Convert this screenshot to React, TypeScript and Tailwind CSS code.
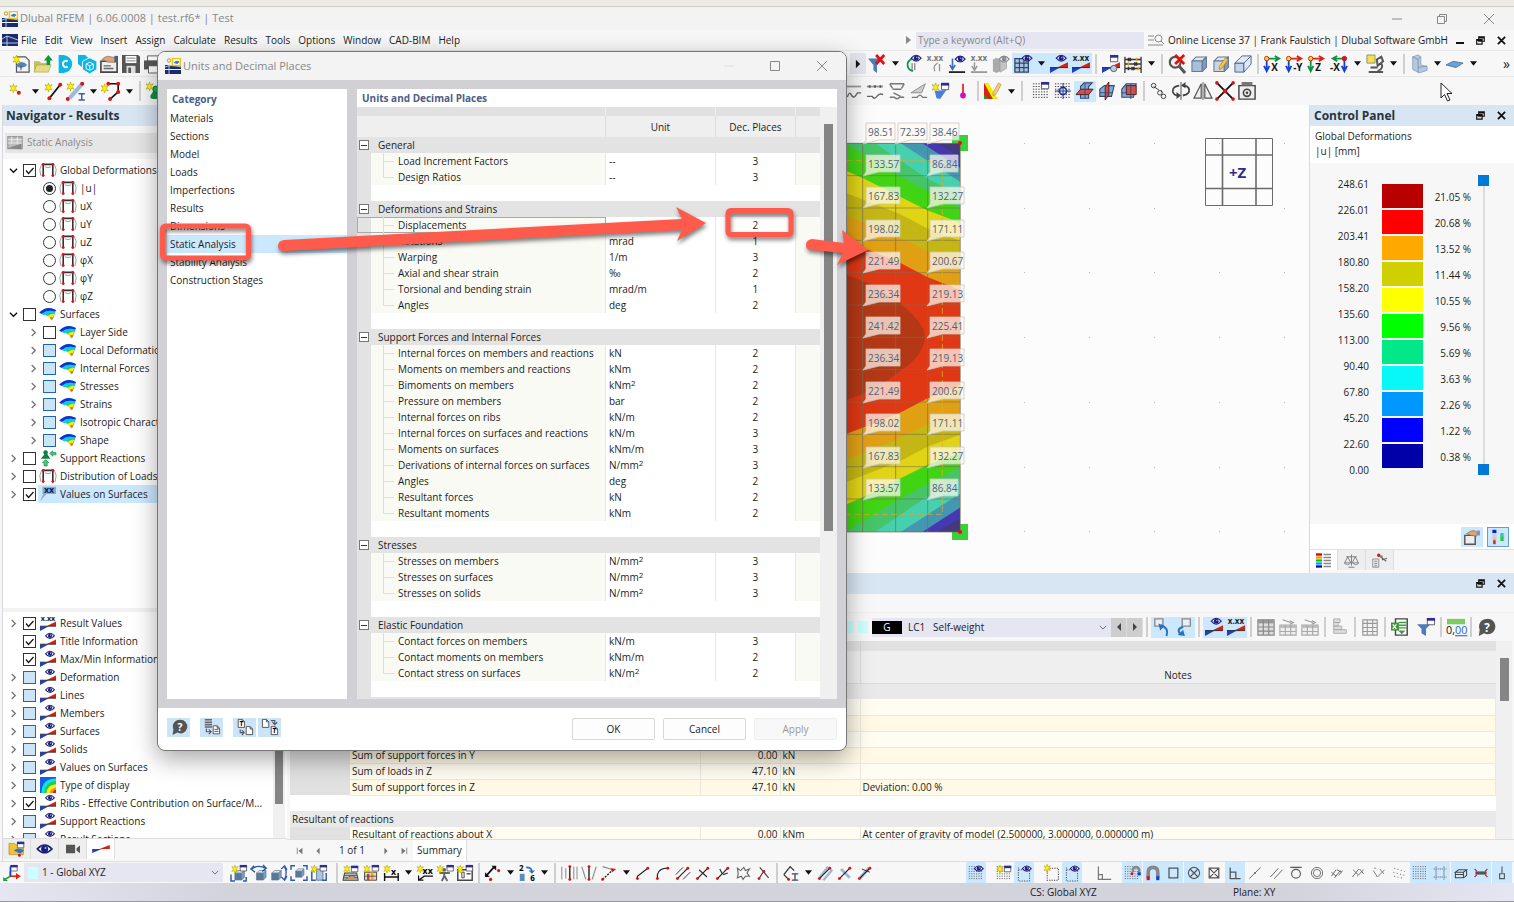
import { useState } from "react";
import type { ReactNode } from "react";
import clsx from "clsx";

/* ---------- icon parts ---------- */

const Star = ({ x = 0, y = 0 }) => (
  <path
    transform={`translate(${x} ${y})`}
    d="M5 0l1 3 3-1-2 3 2 3-3-1-1 3-1-3-3 1 2-3-2-3 3 1z"
    fill="#fff200"
    stroke="#a89400"
    strokeWidth=".6"
  />
);

const Eye = ({ x = 0, y = 0, c = "#1d1d7a" }) => (
  <g transform={`translate(${x} ${y})`}>
    <path d="M0 3.500Q5.500-3 11 3.500 5.500 10 0 3.500z" fill="#fff" stroke={c} strokeWidth="1.300" />
    <circle cx="5.500" cy="3.500" r="2.700" fill={c} />
    <circle cx="6.200" cy="2.700" r=".8" fill="#8fb4ff" />
  </g>
);

const Wedge = () => (
  <g>
    <path d="M0 20v-6h11z" fill="#1f3fc0" />
    <path d="M20 8v6H8z" fill="#d8200c" />
    <path d="M0 14h20" stroke="#222" strokeWidth="1" />
  </g>
);

const Win = ({ x = 0, y = 0 }) => (
  <g transform={`translate(${x} ${y})`}>
    <path d="M.5.5h8v7h-8z" fill="#fff" stroke="#555" />
    <path d="M0 0h9v3H0z" fill="#2c2c9c" />
  </g>
);

const Cube = ({ x = 0, y = 0, s = 1, c = "#a8c0dc", e = "#64798f" }) => (
  <g transform={`translate(${x} ${y}) scale(${s})`} stroke={e} strokeLinejoin="round">
    <path d="M1 5l4-4h10l-4 4z" fill="#dbe7f4" />
    <path d="M1 5h10v10H1z" fill={c} />
    <path d="M11 5l4-4v10l-4 4z" fill="#7f9cc0" />
  </g>
);

const Dot = ({ x, y, r = 1.8 }: { x: number; y: number; r?: number }) => (
  <circle cx={x} cy={y} r={r} fill="#e01010" />
);

const Xs = ({ c = "#222", t = "x.xx" }) => (
  <text x="10" y="7" textAnchor="middle" fontSize="9" fontWeight="700" fill={c} fontFamily="Open Sans">
    {t}
  </text>
);

const Grid = ({ c = "#555", x = 1, y = 1, n = 6 }) => (
  <g stroke={c} strokeWidth="1" strokeDasharray="1.500 1.500">
    {Array.from({ length: n }, (_, i) => (
      <path key={i} d={`M${x} ${y + 1 + i * 3}h17`} />
    ))}
  </g>
);

const Axis = ({ t, a, b, flip }: { t: string; a: string; b: string; flip?: boolean }) => (
  <g>
    <path d={flip ? "M16 4H4m4-3L3 4l5 3" : "M3 4h13m-4-3l5 3-5 3"} stroke={a} strokeWidth="2" fill="none" />
    <path d={flip ? "M16 4v12m-3-4l3 6 3-6" : "M3 4v12m-3-4l3 6 3-6"} stroke={b} strokeWidth="2" fill="none" />
    <circle cx={flip ? 16 : 3} cy="4" r="2.500" fill={flip ? "#d01818" : "#f8d820"} stroke="#c02020" />
    <text x={flip ? 0 : 8} y="18" fontSize="11" fontWeight="700" fill="#111" fontFamily="Open Sans">
      {t}
    </text>
  </g>
);

const Page = ({ x = 0, y = 0 }) => (
  <path transform={`translate(${x} ${y})`} d="M.5.5h5l3 3v7h-8zM5.500.5v3h3" fill="#fff" stroke="#555" strokeWidth="1.200" />
);

const Line2 = ({ c = "#222", d = "M3 17L16 4" }) => (
  <g>
    <path d={d} stroke={c} strokeWidth="1.500" fill="none" />
    <Dot x={3} y={17} />
    <Dot x={16} y={4} />
  </g>
);

const g = (d: string, c = "#555", w = 1.2) => <path d={d} stroke={c} strokeWidth={w} fill="none" />;

const icons: Record<string, ReactNode> = {
  "": null,
  new: <g><path d="M5 2h10l4 4v13H5z" fill="#f4f4f4" stroke="#555" strokeWidth="1.400" /><path d="M4 12q6-8 13-1-6 6-13 1z" fill="#5784b4" /><path d="M10 12v5" stroke="#345" /><Star /></g>,
  open: <g><path d="M0 19V7h6l2 2h7v10z" fill="#c9bf62" /><path d="M0 19l3-8h16l-3 8z" fill="#e6dc86" stroke="#a8a050" strokeWidth=".7" /><path d="M14 11V6h-3l5-6 5 6h-3v5z" fill="#0b9a3a" /></g>,
  dlubal: <g><path d="M3 0h5a10 10 0 010 20H3z" fill="#0cb5e6" /><path d="M13 7a3.500 3.500 0 100 6" stroke="#fff" strokeWidth="2.200" fill="none" /></g>,
  blocks: <g><path d="M0 0h8l4 4v10H5l-5-4z" fill="#0cb5e6" /><path d="M13 3l8 4v9l-8 5-8-5V7z" fill="#0cb5e6" stroke="#f7f7f7" /><path d="M13 8l4 2v5l-4 2-4-2v-5zM13 12v5M13 12l4-2M13 12l-4-2" stroke="#fff" fill="none" /></g>,
  hand: <g><path d="M1 7h18v12H1z" fill="#eee" stroke="#444" strokeWidth="1.800" /><path d="M4 12h8M4 15h11" stroke="#666" strokeWidth="1.400" /><path d="M2 5q5-5 10-3l6 1v5H9z" fill="#d9a57c" stroke="#7a5030" strokeWidth=".6" /><path d="M16 1h4v7h-4z" fill="#4b5f86" /></g>,
  save: <g><path d="M0 0h18l2 2v18H0z" fill="#555" /><path d="M4 1h12v8H4z" fill="#fff" /><path d="M5 3.500h10M5 6.500h10" stroke="#777" /><path d="M5 12h10v8H5z" fill="#ddd" /><path d="M7 14h3v6H7z" fill="#555" /></g>,
  print: <g><path d="M4 1h12v6H4z" fill="#fff" stroke="#555" /><path d="M0 6h20v10H0z" fill="#555" /><path d="M5 12h10v8H5z" fill="#fff" stroke="#555" /></g>,
  node: <g><Star x={1} y={2} /><Dot x={12} y={12} r={2.200} /></g>,
  line: <g>{g("M6 18L18 3", "#111", 2)}<Dot x={6} y={18} r={2.200} /><Dot x={18} y={3} r={2.200} /><Star x={0} y={1} /></g>,
  member: <g>{g("M4 18L18 2", "#9db8e0", 4.5)}<Dot x={2} y={19} r={2.200} /><Dot x={18} y={2} r={2.200} /><Star /><path d="M14 13h7M14 20h7M17.500 13v7" stroke="#3e5f9a" strokeWidth="1.600" /></g>,
  poly: <g>{g("M6 2h12v9l-9 8", "#111", 1.8)}<Dot x={7} y={2} r={2.200} /><Dot x={18} y={2} r={2.200} /><Dot x={18} y={11} r={2.200} /><Dot x={9} y={19} r={2.200} /><Star x={-2} y={2} /></g>,
  support: <g><path d="M8 19q-4 0-3-4l4-6h4l4 6q1 4-3 4z" fill="#109040" /><circle cx="11" cy="8" r="3.500" fill="#18b050" stroke="#064" /><Star x={-1} y={0} /></g>,
  play: <path d="M7 4l6 6-6 6z" fill="#111" />,
  filterx: <g><path d="M0 4h16l-6 7v9l-4-3v-6z" fill="#4d7bbb" /><path d="M9 0l9 10M18 0L9 10" stroke="#e01010" strokeWidth="3" /></g>,
  curveeye: <g>{g("M9 4Q3 7 4 12t6 6", "#0a9a4a", 2)}{g("M12 9v8M9 9v8", "#555", 1)}<Eye x={8} y={0} /></g>,
  curvex: <g><Xs c="#777" />{g("M13 9q-6 3-3 9M15 10v8", "#999", 1.5)}</g>,
  loadeye: <g>{g("M5 4v11M2 11l3 5 3-5", "#3a6fb0", 1.8)}<path d="M1 19h18" stroke="#222" strokeWidth="2" /><Eye x={8} y={1} /></g>,
  loadx: <g><Xs c="#777" />{g("M5 8v8M2 12l3 5 3-5", "#999", 1.6)}<path d="M1 19h18" stroke="#999" strokeWidth="2" /></g>,
  boxes: <g><path d="M1 5l4-2 4 2v13l-4 2-4-2z" fill="#aaa" /><path d="M9 3h7v12l-7 4z" fill="#c4c4c4" stroke="#888" strokeWidth=".6" /><Eye x={8} y={1} c="#888" /></g>,
  grideye: <g><path d="M1 4h15v15H1z" fill="#a8c4e4" stroke="#2c4468" strokeWidth="1.400" /><path d="M1 9h15M1 14h15M6 4v15M11 4v15" stroke="#2c4468" strokeWidth="1.200" /><Eye x={9} y={0} /></g>,
  wedgeeye: <g><Wedge /><Eye x={7} y={0} /></g>,
  wedgex: <g><Xs /><Wedge /></g>,
  wedge: <g><path d="M-1 15v-5h12z" fill="#1f3fc0" /><path d="M21 5v5H8z" fill="#d8200c" /></g>,
  wedgewin: <g><Wedge /><Win x={9} y={0} /><circle cx="13" cy="15" r="3.500" fill="#bcd" stroke="#456" /></g>,
  abacus: <g>{g("M1 2v18M19 2v18M1 5h18M1 10h18M1 15h18", "#333", 1.4)}<path d="M5 3v4M7 3v4M12 8v4M14 8v4M5 13v4M9 13v4M11 13v4" stroke="#333" strokeWidth="1.800" /><path d="M14 3v4M5 8v4M16 13v4" stroke="#e0a010" strokeWidth="1.800" /></g>,
  zoomx: <g><circle cx="8" cy="8" r="6" fill="#eee" stroke="#555" strokeWidth="2.400" /><path d="M12 12l7 8" stroke="#555" strokeWidth="3.400" /><path d="M8 0l10 10M18 0L8 10" stroke="#e01010" strokeWidth="3" /></g>,
  cube: <Cube x={1} y={1} s={1.15} />,
  cubepen: <g><Cube x={1} y={1} s={1.15} c="#cdd5de" /><path d="M8 13l7-10 3 2-7 10-3 1z" fill="#f5c542" stroke="#b06010" strokeWidth=".6" /></g>,
  cubewire: <g><path d="M1 9h10v10H1z" fill="#c4d4ea" stroke="#46608a" /><path d="M1 9l8-8h10l-8 8zM19 1v9l-8 9V9" fill="#e0e8f4" stroke="#46608a" /></g>,
  ax: <Axis t="X" a="#109040" b="#1840d0" />,
  ay: <Axis t="-Y" a="#d02818" b="#1840d0" />,
  az: <Axis t="Z" a="#d02818" b="#109040" />,
  anx: <Axis t="-X" a="#109040" b="#1840d0" flip />,
  scope: <g><path d="M1 0h9v9H1z" fill="#f4e24a" stroke="#888" /><path d="M3 19h16M12 5l5-3 2 5-6 5zM17 9q3 6-4 9M5 14h8" stroke="#555" strokeWidth="2.200" fill="none" /></g>,
  solid: <g><path d="M3 2l6-2 3 2v9l7 2v4l-9 3-7-4z" fill="#b4c8e0" stroke="#8095b0" strokeWidth=".8" /><path d="M3 2l6 3v14M9 5l3-3M9 14l10-2" stroke="#7c93b3" fill="none" /></g>,
  plate: <path d="M0 11l8-4 11 2-8 5z" fill="#6ba0d8" stroke="#35608e" strokeWidth=".8" />,
  supA: <g>{g("M1 5h18", "#999", 2)}{g("M1 16h3q2-6 4-2t4 2 3-4h4", "#666", 1.5)}</g>,
  supB: <g>{g("M1 5h18", "#999", 2)}{g("M3 5h2M9 5h2M15 5h2", "#555", 3)}{g("M1 16h6q2 4 5 0t7-2", "#666", 1.5)}</g>,
  supC: <g>{g("M2 2h16M2 2l3 5M18 2l-3 5M5 8h10M2 17h5q3 3 6 0h5M6 12l8 4", "#777", 1.6)}</g>,
  supD: <g><path d="M1 12L17 2l-4 10z" fill="#ccc" stroke="#888" /><path d="M2 17h6q3-5 6 0h5" stroke="#777" fill="none" strokeWidth="1.500" /></g>,
  winstar: <g><path d="M3 10l13-1-7 10-4-1z" fill="#4b7de0" /><Win x={10} y={1} /><Star x={-1} y={1} /></g>,
  pin: <g>{g("M10 2v12", "#e01010", 1.8)}<circle cx="10" cy="15" r="3.200" fill="#d010c0" /></g>,
  colors: <g><path d="M0 1l15 18H0z" fill="#10a030" /><path d="M0 1h5l10 18h-5z" fill="#ffe500" /><path d="M0 1v13l5 5h4z" fill="#e02010" /><path d="M10 12L16 1l3 2-6 11-3 1z" fill="#f2d060" stroke="#976" strokeWidth=".6" /></g>,
  gridwin: <g><Grid c="#333" /><Win x={10} y={0} /></g>,
  gridnode: <g><Grid c="#333" /><circle cx="10" cy="10" r="4" fill="#d8e4f8" stroke="#1d2f8a" strokeWidth="1.800" /><path d="M10 1v18M1 10h18" stroke="#1d2f8a" /></g>,
  planeA: <g><path d="M5 5l4-4h9l-4 4v13H5z" fill="#84a8d4" stroke="#2f4a70" strokeWidth="1.200" /><path d="M0 14l5-6h14l-5 6z" fill="#d05050" stroke="#501414" /><path d="M10 2v16" stroke="#2f4a70" /></g>,
  planeB: <g><path d="M2 8l5-4h11l-3 12H2z" fill="#84a8d4" stroke="#2f4a70" strokeWidth="1.200" /><path d="M8 6l4-6v14l-4 6z" fill="#d05050" stroke="#501414" /><path d="M2 12h14" stroke="#2f4a70" /></g>,
  planeC: <g><path d="M2 8l5-6h11l-3 15H2z" fill="#84a8d4" stroke="#2f4a70" strokeWidth="1.200" /><path d="M7 4h11v10H7z" fill="#d05050" stroke="#501414" /><path d="M12 2v17M2 12h5" stroke="#2f4a70" /></g>,
  link: <g>{g("M4 5l6 4M12 9l2 3", "#333", 1)}<circle cx="4" cy="4" r="2.500" fill="none" stroke="#333" /><circle cx="11" cy="12" r="2.500" fill="none" stroke="#333" /><circle cx="15" cy="16" r="2.500" fill="none" stroke="#333" /></g>,
  rotate: <g>{g("M8 4q-8 1-7 7 1 4 6 4M12 15q8-1 7-7-1-4-7-4", "#444", 2)}{g("M10 0v20", "#444", 1)}<path d="M5 11l5 4-5 4zM15 0v7l-5-3z" fill="#444" /></g>,
  mirror: <g><path d="M8 2v16H0zM12 2v16h8z" fill="#eee" stroke="#555" strokeWidth="1.300" />{g("M10 0v20", "#555", 1)}</g>,
  cut: <g>{g("M1 1l18 18M19 1L1 19", "#111", 2)}<Dot x={1} y={1} r={2} /><Dot x={19} y={1} r={2} /><Dot x={10} y={10} r={2.500} /><Dot x={1} y={19} r={2} /><Dot x={19} y={19} r={2} /></g>,
  camera: <g><path d="M1 4h18v15H1z" fill="#eee" stroke="#444" strokeWidth="1.600" /><path d="M4 0h12v4H4z" fill="#777" /><circle cx="10" cy="12" r="4" fill="none" stroke="#444" strokeWidth="1.800" /><circle cx="10" cy="12" r="1.500" fill="#444" /></g>,
  frame: <g>{g("M4 3h12M4 3v14M16 3v14", "#333", 2)}{g("M2 3Q-2 9 1 17M18 3q4 6 1 14M6 6q4 2 8 0", "#888", 1)}<Dot x={4} y={3} /><Dot x={16} y={3} /><Dot x={4} y={17} /><Dot x={16} y={17} /></g>,
  surface: <g><path d="M0 8Q8 1 15 3l5 2-4 12-5-4z" fill="#18d070" /><path d="M-1 8Q7 1 15 3l5 2-1 2Q9 4 2 10z" fill="#1030e0" /><path d="M2 10q7-6 17-3l-1 3Q11 7 6 12z" fill="#10c8f0" /><path d="M9 13q4-4 9-3l-2 4-4 1z" fill="#f4ec10" /><path d="M12 15q2-2 4-1l-1 4z" fill="#ff7010" /></g>,
  reaction: <g><circle cx="7" cy="3" r="2.800" fill="#0c8040" /><path d="M1 11l5-6h3l4 6z" fill="#0c8040" /><path d="M12 4l4-3v2h4v3h-4v2zM7 12l4 4H9v4H5v-4H3z" fill="#48c878" stroke="#0c8040" strokeWidth=".7" /></g>,
  flag: <g><path d="M3 1h17v9H8l-8 9 4-9H3z" fill="#86aed2" /><text x="5" y="9" fontSize="11" fontWeight="700" fill="#0c1c50" fontFamily="Open Sans">xx</text></g>,
  contour: <g><path d="M0 0h20v20H0z" fill="#1060f0" /><path d="M2 20Q2 2 20 2v18z" fill="#10e0f0" /><path d="M5 20Q6 6 20 5v15z" fill="#20d040" /><path d="M8 20Q9 10 20 9v11z" fill="#f4f020" /><path d="M12 20q1-6 8-7v7z" fill="#ff9010" /><path d="M16 20q0-3 4-4v4z" fill="#e02010" /></g>,
  folder: <g><path d="M0 3h7l2 2h9v12H0z" fill="#f2c230" stroke="#a87a10" strokeWidth=".7" /><Win x={10} y={1} /><path d="M6 12q6-5 13 0l-5 4z" fill="#2e76c8" /><Dot x={13} y={18} /></g>,
  eye: <g transform="translate(-1 4) scale(1.900 1.700)"><Eye /></g>,
  cam: <path d="M0 4h13v12H0zM15 9l5-4v11l-5-4z" fill="#555" />,
  xyz: <g><Win x={8} y={0} />{g("M8 8v6l-7 4", "#18a040", 2)}{g("M8 14h10", "#e02010", 2)}<path d="M15 10l6 4-6 4z" fill="#e02010" /><path d="M-1 15v5h6z" fill="#18a040" />{g("M8 2v12", "#1840d0", 2)}</g>,
  vA: <g><Cube x={4} y={6} s={0.85} c="#56789c" />{g("M0 12v8h5M15 20h4v-5", "#2b59a8", 1.8)}<Win x={11} y={0} /><Star x={0} y={0} /></g>,
  vB: <g><Cube x={6} y={6} s={0.85} c="#56789c" />{g("M1 5q8-6 17-1M4 1L0 5l5 4M15 0l4 4-5 4", "#2b59a8", 1.8)}</g>,
  vC: <g><Cube x={0} y={6} s={0.85} c="#56789c" />{g("M17 2q4 8 0 16M13 5l4-4 3 5M13 15l4 4 3-5", "#2b59a8", 1.6)}</g>,
  vD: <g><Cube x={5} y={4} s={0.75} c="#56789c" />{g("M0 6V1h5M15 1h5v5M0 14v5h5M15 19h5v-5", "#2b59a8", 1.8)}</g>,
  vE: <g><path d="M7 5h8v14H7z" fill="#a9c4e4" stroke="#4a6a90" />{g("M1 8v11h5M19 10v9h-5M3 3v5", "#2b59a8", 1.8)}<Win x={11} y={0} /><Star x={-1} /></g>,
  cA: <g><path d="M2 10h15l2 9H0z" fill="#c4c4c4" stroke="#444" strokeWidth="1.300" /><path d="M1 13h17M1 16h18M4 18q6-8 12-2" stroke="#444" fill="none" /><path d="M6 15h8v3H6z" fill="#e09050" /><Win x={10} y={1} /><Star /></g>,
  cB: <g><path d="M2 9h15v10H2z" fill="#e8d8c8" stroke="#444" strokeWidth="1.200" /><path d="M5 11h3v8H5z" fill="#d04020" /><path d="M10 9h3v10h-3z" fill="#f0a020" /><path d="M2 14h15" stroke="#444" /><Win x={11} y={0} /><Star /></g>,
  cC: <g>{g("M2 10v10M19 10v10M2 15h17", "#111", 1.8)}<text x="10" y="12" fontSize="11" fontWeight="700" fontFamily="Open Sans">x</text><Star /></g>,
  cD: <g>{g("M2 19l7-5h11M2 13v6h6", "#111", 1.6)}<text x="7" y="11" fontSize="11" fontWeight="700" fontFamily="Open Sans">xx</text><Star x={-1} /></g>,
  cE: <g>{g("M9 9v5l-3 6M9 13l4 7M3 10h13", "#666", 2.4)}<circle cx="9" cy="6" r="2.400" fill="#666" /><Win x={12} y={0} /><Star x={-1} /></g>,
  cF: <g><path d="M1 6h18v13H1z" fill="#fff" stroke="#444" strokeWidth="1.800" /><path d="M6 9v7h3V9z" fill="#eee" stroke="#333" />{g("M12 11h5", "#333", 1.6)}<Win x={11} y={0} /><Star x={-1} /></g>,
  nA: <g>{g("M2 13L11 3", "#111", 2.2)}<path d="M0 9v6h6zM8 1h6v6z" fill="#111" /><Dot x={17} y={7} r={2} /><Dot x={7} y={18} r={2} /></g>,
  nB: <g><text x="0" y="8" fontSize="10" fontWeight="700" fontFamily="Open Sans">2</text><text x="14" y="20" fontSize="10" fontWeight="700" fontFamily="Open Sans">6</text><path d="M1 11h6v9H1z" fill="#5b8cc0" />{g("M9 3q7 0 7 5", "#2b70b8", 2)}<path d="M12 7h8l-4 4z" fill="#2b70b8" /></g>,
  l1: <g>{g("M1 2v16M6 4v13M16 2v16M20 2v16", "#888", 1.2)}{g("M11 2v16", "#111", 1.6)}<Dot x={11} y={2} /><Dot x={11} y={18} /></g>,
  l2: <g>{g("M1 2l5 16M19 2l-5 16", "#888", 1.4)}{g("M10 2v16", "#111", 1.6)}<Dot x={10} y={2} /><Dot x={10} y={18} /></g>,
  l3: <g>{g("M2 2l13 4", "#888", 1.4)}<path d="M2 18L15 6" stroke="#111" strokeWidth="1.600" strokeDasharray="2.500 1.500" /><path d="M12 4l7 1-5 4z" fill="#e01010" /><Dot x={2} y={18} /></g>,
  l4: <Line2 d="M3 17V14L16 4" />,
  l5: <Line2 d="M3 17V12Q5 4 16 4" />,
  l6: <g><Line2 />{g("M1 12l9-9M10 18l9-9", "#333")}</g>,
  l7: <g><Line2 />{g("M5 6l10 9", "#333", 1.5)}</g>,
  l8: <g><Line2 />{g("M6 5l3 6M10 12l6-2", "#333", 1.5)}</g>,
  l9: g("M3 4l4 3 4-4 2 4 5-2-3 5 3 4-5 0-3 4-2-4-5 2 1-5z", "#666", 1.4),
  l10: <g>{g("M5 17l5-8M6 3l11 13", "#444", 1.5)}<Dot x={5} y={17} /><Dot x={11} y={8} /></g>,
  m1: <g>{g("M1 12L9 2l5 5M1 12l6 6", "#333", 1.6)}<Dot x={7} y={18} /><path d="M11 11h8M11 19h8M15 11v8" stroke="#445" strokeWidth="1.600" /></g>,
  m2: <g>{g("M3 16L14 2M8 19L19 6", "#9db8d8", 3)}<Line2 /></g>,
  m3: <g>{g("M5 5l11 11", "#9db8d8", 3.5)}<Line2 /></g>,
  m4: <g>{g("M4 16L15 4", "#9db8d8", 4)}{g("M6 5l10 4", "#333")}<Line2 /></g>,
  gE: <g><Grid /><Eye x={8} y={1} /></g>,
  gS: <g><Grid /><Star x={0} y={0} /><Win x={10} y={1} /></g>,
  gD: <g><path d="M4 4h14v15H4z" fill="none" stroke="#444" strokeWidth="1.300" strokeDasharray="1.500 1.500" /><Star x={-1} y={-1} /></g>,
  gF: <g><path d="M3 6h14v14M3 3v17h14" fill="none" stroke="#555" strokeWidth="1.300" strokeDasharray="1.500 1.500" /><Eye x={8} y={1} /></g>,
  ang: g("M3 2v16h16M3 12h5v6", "#777", 1.5),
  gM: <g><Grid /><path d="M11 9V5q4-5 8 0v4" stroke="#888" strokeWidth="3" fill="none" /><Dot x={10} y={11} /><path d="M17 9h4v4h-4z" fill="#1840d0" /></g>,
  magnet: <g><path d="M4 16V9q0-6 6-6t6 6v7" stroke="#888" strokeWidth="4.500" fill="none" /><path d="M2 14h4v5H2z" fill="#d01818" /><path d="M14 14h4v5h-4z" fill="#1840d0" /></g>,
  sq: g("M5 4h11v12H5z", "#555", 1.6),
  cx: <g>{g("M5 5l10 10M15 5L5 15", "#555", 1.5)}<circle cx="10" cy="10" r="7" fill="none" stroke="#555" strokeWidth="1.400" /></g>,
  bx: g("M4 4h12v12H4zM4 4l12 12M16 4L4 16", "#555", 1.5),
  perp: g("M4 3v14h13M4 9h7v8", "#555", 1.6),
  sl: g("M3 17L17 3M9 9l2 2", "#666"),
  sl2: g("M3 15L13 4M8 17L18 6", "#666"),
  tang: <g>{g("M3 3h14", "#555", 1.6)}<circle cx="10" cy="11" r="5.500" fill="none" stroke="#555" strokeWidth="1.400" /></g>,
  circ: <g><circle cx="10" cy="10" r="7" fill="none" stroke="#555" /><circle cx="10" cy="10" r="4.500" fill="none" stroke="#555" /></g>,
  in1: g("M3 14l6-8M7 16l7-9M3 9l6 5M10 6l6 3M12 13l5-6", "#666"),
  in2: g("M3 15l8-10M9 14l8-8M4 6l6 6M12 5l5 6", "#666"),
  in3: g("M3 7l5 8M8 15l9-9M4 4l2 0M11 5l5 6", "#777"),
  dots: (
    <g stroke="#777" strokeWidth="1.300" strokeDasharray="1.300 3">
      <path d="M4 4l13 4M3 9l14 4M4 14l12 3" />
    </g>
  ),
  grid: <Grid />,
  box4: <path d="M5 2v16M15 2v16M2 5h16M2 15h16" stroke="#666" strokeWidth="1.400" strokeDasharray="1.500 1" />,
  stack: g("M3 9l4-3h10l-4 3zM3 9v7h10V9M13 16l4-3V6M3 12h10", "#444", 1.3),
  dim: <g><path d="M3 8h14v4H3z" fill="#555" />{g("M2 5l3 3M18 5l-3 3M2 15l3-3M18 15l-3-3", "#d02020", 1.4)}</g>,
  down: g("M10 2v8M7 11h6v6H7z", "#555", 1.4),
  rotL: <g><path d="M2 1h9v8H2z" fill="#e8eef6" stroke="#888" strokeWidth="1.500" />{g("M9 8q9 3 6 12", "#2b70b8", 2.2)}<path d="M6 6l2 8 5-5z" fill="#2b70b8" /></g>,
  rotR: <g><path d="M8 1h9v8H8z" fill="#e8eef6" stroke="#888" strokeWidth="1.500" />{g("M9 10q-8 2-3 8", "#2b70b8", 2.2)}<path d="M3 19l8 1-2-7z" fill="#2b70b8" /></g>,
  table: <g><path d="M1 2h18v17H1z" fill="#ddd" stroke="#888" strokeWidth="1.300" /><path d="M1 2h18v4H1z" fill="#999" /><path d="M1 10h18M1 14.500h18M7 2v17M13 2v17" stroke="#888" strokeWidth="1.300" /></g>,
  table2: <g><path d="M1 8h18v11H1z" fill="#eee" stroke="#aaa" strokeWidth="1.300" /><path d="M1 8h18v3H1z" fill="#bbb" /><path d="M1 15h18M7 8v11M13 8v11" stroke="#aaa" strokeWidth="1.300" />{g("M4 2l9 3M12 3l4 2-4 2", "#999")}</g>,
  bars: <path d="M3 1h7v4H3zM3 5h5v4H3zM3 9h9v4H3zM3 13h14v4H3z" fill="#ddd" stroke="#aaa" />,
  tablelite: <g><path d="M2 2h16v17H2z" fill="#f2f2f2" stroke="#999" strokeWidth="1.300" /><path d="M2 6h16M2 10.500h16M2 15h16M7 2v17M13 2v17" stroke="#999" strokeWidth="1.200" /></g>,
  excel: <g><path d="M5 1h13v18H5z" fill="#fff" stroke="#444" strokeWidth="1.600" /><path d="M9 5h8M9 8h8M9 11h8" stroke="#3f9a3f" strokeWidth="1.600" /><path d="M0 5h9v9H0z" fill="#3f9a3f" /><path d="M2 7l4 5M6 7l-4 5" stroke="#fff" strokeWidth="1.400" /><path d="M8 14h8l-4 4z" fill="#3f9a3f" /></g>,
  filterwin: <g><path d="M0 7h15l-5 5v8l-5-3v-5z" fill="#4d7bbb" /><Win x={11} y={0} /></g>,
  decimals: <g><path d="M0 1h20v6H0z" fill="#7ccc60" /><text x="-1" y="18" fontSize="12" fontFamily="Open Sans" fill="#111">0,<tspan fill="#2a60e0" textDecoration="underline">00</tspan></text></g>,
  help: <g><path d="M11 1a8.500 8.500 0 11-3 16l-6 3 1-7A8.500 8.500 0 0111 1z" fill="#555" /><text x="8" y="15" fontSize="13" fontWeight="700" fill="#fff" fontFamily="Open Sans">?</text></g>,
  db: <g><path d="M1 1h9M1 4h9M1 7h9M1 10h9" stroke="#666" strokeWidth="2" />{g("M3 12v4h5M6 13l3 3-3 3", "#556", 1.4)}<Page x={11} y={8} />{g("M13 13h5M13 15.500h5", "#555")}</g>,
  tmplA: <g><Page x={1} y={0} /><text x="3" y="9" fontSize="8" fontWeight="700" fontFamily="Open Sans">T</text>{g("M4 13v4h4M6 14l3 3-3 3", "#556", 1.4)}<Page x={11} y={9} /></g>,
  tmplB: <g><Page x={0} y={0} />{g("M11 2h5v5M13 4l3 3 3-3", "#556", 1.4)}<Page x={11} y={9} /><text x="13" y="18" fontSize="8" fontWeight="700" fontFamily="Open Sans">T</text></g>,
  analysis: <g><path d="M1 2h18v15H1z" fill="#bdbdbd" stroke="#999" strokeWidth="1.500" /><path d="M1 6h18M1 10h18M6 2v9M13 2v9" stroke="#f4f4f4" /><path d="M2 16l16-5v7z" fill="#888" /></g>,
  hand2: <g><path d="M1 8h13v11H1z" fill="#eee" stroke="#555" strokeWidth="1.800" /><path d="M3 6q6-5 10-4l4 2-1 5-7-1z" fill="#d9a57c" stroke="#7a5030" strokeWidth=".6" /><path d="M16 2h4v6h-4z" fill="#7c93c3" /></g>,
  scales: <g><path d="M3 3h5v14H3zM13 6h5v9h-5z" fill="#c8d0d8" /><path d="M3 1h5v4H3z" fill="#1020c0" /><path d="M4 14h3v5H4z" fill="#e02010" /><path d="M4 12h3v2H4z" fill="#f0c010" /><path d="M13 5h4v4h-4z" fill="#18d0d0" /><path d="M13 9h4v6h-4z" fill="#20d040" /></g>,
  legend: <g>{["#c00", "#f90", "#0c0", "#09f", "#00a"].map((c, i) => <path key={c} d={`M0 ${2 + i * 4}h8`} stroke={c} strokeWidth="3" />)}{g("M10 2h10M10 6h10M10 10h10M10 14h10M10 18h10", "#888", 2)}</g>,
  balance: <g>{g("M10 2v15M3 5h14M6 19h8M5 5l-4 8M5 5l4 8M15 5l-4 8M15 5l4 8", "#777")}<path d="M0 13h9q-4 5-9 0zM11 13h9q-4 5-9 0z" fill="#ddd" stroke="#777" /></g>,
  pick: <g><path d="M1 8h8v11H1z" fill="#eee" stroke="#777" />{g("M3 11h4M3 14h4M3 17h4", "#777")}<Dot x={9} y={3} r={2.200} />{g("M10 4l9 7M13 3l1 6 6-2", "#666", 1.4)}</g>,
};

const Icon = ({ name, className = "size-[18px]" }: { name: string; className?: string }) => (
  <svg viewBox="0 0 20 20" className={clsx("shrink-0 overflow-visible", className)} aria-hidden>
    {icons[name]}
  </svg>
);

const Logo = ({ className = "size-4" }: { className?: string }) => (
  <svg viewBox="0 0 16 16" className={clsx("shrink-0", className)} aria-hidden>
    <path d="M0 7h16v4H0zM0 12h16v4H0z" fill="#1b2c6e" />
    <path d="M4 5v11M0 9q6-3 16 0" stroke="#dfe6ff" strokeWidth=".8" fill="none" />
    <path d="M7.500.5h8v7h-8z" fill="#fff" stroke="#f0c400" strokeWidth="1.500" />
    <path d="M8.500 5q3-4 6-1l-2 2z" fill="#3b7ec0" />
    <circle cx="4" cy="2.500" r="1.700" fill="none" stroke="#c89a10" />
  </svg>
);

/* "|" separator, "v" drop-down arrow, "~" space, leading "*" switched on */
function Tools({ items, cell = "w-[22px]" }: { items: string; cell?: string }) {
  return (
    <>
      {items.split(" ").map((raw, i) => {
        const on = raw.startsWith("*");
        const name = on ? raw.slice(1) : raw;
        if (name === "|") return <span key={i} className="mx-[3px] h-5 w-0.5 shrink-0 bg-[#cfcfcf]" />;
        if (name === "~") return <span key={i} className="w-1 shrink-0" />;
        return (
          <button
            key={i}
            type="button"
            aria-label={name === "v" ? "More" : name}
            className={clsx(
              "flex h-[21px] shrink-0 items-center justify-center",
              name === "v" ? "w-3.5" : cell,
              on && "bg-[#cce8ff]"
            )}
          >
            {name === "v" ? (
              <svg viewBox="0 0 8 5" className="h-[5px] w-[7px]" aria-hidden>
                <path d="M0 0h8L4 5z" fill="#111" />
              </svg>
            ) : (
              <Icon name={name} className={cell === "w-5" ? "size-4" : "size-[18px]"} />
            )}
          </button>
        );
      })}
    </>
  );
}

function DockButtons() {
  return (
    <span className="ml-auto flex items-center gap-3 pr-2">
      <button type="button" aria-label="Float">
        <svg viewBox="0 0 10 10" className="size-[9px]" aria-hidden>
          <path d="M3 .8h6.200v5H3zM3 2h6M.8 4h6v5h-6zM1 5h6" fill="none" stroke="#111" strokeWidth="1.300" />
        </svg>
      </button>
      <button type="button" aria-label="Close">
        <svg viewBox="0 0 10 10" className="size-[9px]" aria-hidden>
          <path d="M1 1l8 8M9 1L1 9" stroke="#111" strokeWidth="2" />
        </svg>
      </button>
    </span>
  );
}

/* ---------- navigator ---------- */

type Box = "on" | "off" | "part" | "radio" | "radio-on";
type Node = { text: string; icon: string; box: Box; level?: number; arrow?: "open" | "closed"; selected?: boolean };

const upperTree: Node[] = [
  { text: "Global Deformations", icon: "frame", box: "on", arrow: "open" },
  { text: "|u|", icon: "frame", box: "radio-on", level: 1 },
  { text: "uX", icon: "frame", box: "radio", level: 1 },
  { text: "uY", icon: "frame", box: "radio", level: 1 },
  { text: "uZ", icon: "frame", box: "radio", level: 1 },
  { text: "φX", icon: "frame", box: "radio", level: 1 },
  { text: "φY", icon: "frame", box: "radio", level: 1 },
  { text: "φZ", icon: "frame", box: "radio", level: 1 },
  { text: "Surfaces", icon: "surface", box: "off", arrow: "open" },
  { text: "Layer Side", icon: "surface", box: "off", level: 1, arrow: "closed" },
  { text: "Local Deformations", icon: "surface", box: "part", level: 1, arrow: "closed" },
  { text: "Internal Forces", icon: "surface", box: "part", level: 1, arrow: "closed" },
  { text: "Stresses", icon: "surface", box: "part", level: 1, arrow: "closed" },
  { text: "Strains", icon: "surface", box: "part", level: 1, arrow: "closed" },
  { text: "Isotropic Characteristics", icon: "surface", box: "part", level: 1, arrow: "closed" },
  { text: "Shape", icon: "surface", box: "part", level: 1, arrow: "closed" },
  { text: "Support Reactions", icon: "reaction", box: "off", arrow: "closed" },
  { text: "Distribution of Loads", icon: "frame", box: "off", arrow: "closed" },
  { text: "Values on Surfaces", icon: "flag", box: "on", arrow: "closed", selected: true },
];

const lowerTree: Node[] = [
  { text: "Result Values", icon: "wedgex", box: "on", arrow: "closed" },
  { text: "Title Information", icon: "wedgeeye", box: "on" },
  { text: "Max/Min Information", icon: "wedgeeye", box: "on" },
  { text: "Deformation", icon: "wedgeeye", box: "part", arrow: "closed" },
  { text: "Lines", icon: "wedgeeye", box: "part", arrow: "closed" },
  { text: "Members", icon: "wedgeeye", box: "part", arrow: "closed" },
  { text: "Surfaces", icon: "wedgeeye", box: "part", arrow: "closed" },
  { text: "Solids", icon: "wedgeeye", box: "part", arrow: "closed" },
  { text: "Values on Surfaces", icon: "wedgeeye", box: "part", arrow: "closed" },
  { text: "Type of display", icon: "contour", box: "part", arrow: "closed" },
  { text: "Ribs - Effective Contribution on Surface/M...", icon: "wedgeeye", box: "on", arrow: "closed" },
  { text: "Support Reactions", icon: "wedgeeye", box: "part", arrow: "closed" },
  { text: "Result Sections", icon: "wedgeeye", box: "part", arrow: "closed" },
];

function TreeRow({ node }: { node: Node }) {
  const radio = node.box.startsWith("radio");
  return (
    <div className={clsx("flex h-[18px] shrink-0 items-center whitespace-nowrap", node.level ? "pl-5" : "")}>
      <span className="flex w-5 shrink-0 justify-center">
        {node.arrow && (
          <svg viewBox="0 0 10 10" className="size-[9px]" aria-hidden>
            <path
              d={node.arrow === "open" ? "M1 3l4 4 4-4" : "M3 1l4 4-4 4"}
              fill="none"
              stroke={node.arrow === "open" ? "#111" : "#777"}
              strokeWidth="1.500"
            />
          </svg>
        )}
      </span>
      <label
        className={clsx(
          "flex h-[18px] items-center gap-1 text-[#1c1c1c]",
          node.selected && "grow bg-[linear-gradient(to_right,transparent_15px,#cce8ff_15px)]"
        )}
      >
        <span className="relative flex size-[13px] shrink-0">
          <input
            type={radio ? "radio" : "checkbox"}
            name={radio ? "deformation" : undefined}
            defaultChecked={node.box === "on" || node.box === "radio-on"}
            className={clsx(
              "peer size-[13px] appearance-none border",
              radio && "rounded-full",
              node.box === "part" ? "border-[#1a69b0] bg-[#cce4f7]" : "border-[#333] bg-white"
            )}
          />
          <svg
            viewBox="0 0 13 13"
            className="pointer-events-none absolute inset-0 hidden size-[13px] peer-checked:block"
            aria-hidden
          >
            {radio ? (
              <circle cx="6.500" cy="6.500" r="3.500" fill="#222" />
            ) : (
              <path d="M3 6.500l2.500 3L10.500 4" fill="none" stroke="#111" strokeWidth="1.200" />
            )}
          </svg>
        </span>
        <Icon name={node.icon} className="size-4" />
        {node.text}
      </label>
    </div>
  );
}

function Navigator() {
  return (
    <aside className="flex w-[285px] shrink-0 flex-col border-l border-[#d8d8e0] bg-white">
      <h2 className="flex h-[21px] shrink-0 items-center bg-[#d8e6f3] pl-[3px] text-[12px] font-bold text-[#2a3340]">
        Navigator - Results
      </h2>
      <div className="flex h-[33px] shrink-0 items-center bg-[#f7f7f7] px-0.5">
        <span className="flex h-5 items-center bg-[#e6e6e6] pl-0.5">
          <Icon name="analysis" className="size-4" />
        </span>
        <select disabled aria-label="Analysis type" className="h-5 grow appearance-none bg-[#e6e6e6] pl-1 text-[#8a8a8a] opacity-100">
          <option>Static Analysis</option>
        </select>
      </div>
      <div className="flex min-h-0 grow flex-col overflow-hidden pt-0.5">
        {upperTree.map((n, i) => (
          <TreeRow key={i} node={n} />
        ))}
      </div>
      <div className="h-1 shrink-0 bg-[#f2f2f2]" />
      <div className="flex h-[226px] shrink-0">
        <div className="flex min-w-0 grow flex-col overflow-hidden pt-0.5">
          {lowerTree.map((n, i) => (
            <TreeRow key={i} node={n} />
          ))}
        </div>
        <div className="mr-0.5 flex w-3 shrink-0 flex-col bg-[#f0f0f0]">
          <span className="mx-0.5 mt-3 h-[180px] bg-[#858585]" />
        </div>
      </div>
      <nav className="flex h-[23px] shrink-0 border-t border-[#ddd] bg-[#f7f7f7]">
        {["folder", "eye", "cam", "wedge"].map((n) => (
          <button
            key={n}
            type="button"
            aria-label={n}
            className={clsx(
              "flex h-5 w-7 items-center justify-center border-r border-[#ddd]",
              n === "wedge" ? "bg-white" : "bg-[#eee]"
            )}
          >
            <Icon name={n} className={n === "folder" || n === "wedge" ? "size-4" : "size-3.5"} />
          </button>
        ))}
      </nav>
    </aside>
  );
}

/* ---------- model view ---------- */

// Upper half of each isoband edge; the lower half is mirrored.
const bands: [string, number[][]][] = [
  ["#4538b0", [[20, 100], [290, 100], [360, 140]]],
  ["#4596b0", [[20, 100], [247, 100], [360, 173]]],
  ["#46d0ae", [[20, 100], [182, 100], [360, 215]]],
  ["#46c46a", [[20, 100], [105, 100], [260, 205], [360, 255]]],
  ["#40d414", [[20, 104], [80, 138], [167, 193], [360, 294]]],
  ["#e0d414", [[20, 183], [70, 205], [260, 300], [360, 338]]],
  ["#c4b614", [[20, 250], [180, 312], [260, 355], [360, 392]]],
  ["#e0a014", [[20, 317], [165, 375], [260, 422], [360, 440]]],
  ["#e03814", [[20, 395], [100, 425], [180, 458], [260, 500], [360, 540]]],
];

const bandPath = (pts: number[][]) =>
  "M" + [...pts, ...pts.map(([x, y]) => [x, 1366 - y]).reverse()].map((p) => p.join(" ")).join("L") + "z";

const rowsLeft = ["133.57", "167.83", "198.02", "221.49", "236.34", "241.42", "236.34", "221.49", "198.02", "167.83", "133.57"];
const rowsRight = ["86.84", "132.27", "171.11", "200.67", "219.13", "225.41", "219.13", "200.67", "171.11", "132.27", "86.84"];

function Tag({ x, y, w = 34, text }: { x: number; y: number; w?: number; text: string }) {
  return (
    <g>
      <path d={`M${x} ${y}h${w}v17h-${w - 13}l-16 4 3-4z`} fill="#fffaf0" fillOpacity=".72" stroke="#c8c8c0" strokeWidth=".8" />
      <text x={x + 2} y={y + 13} fontSize="10" fill="#4d6280">
        {text}
      </text>
    </g>
  );
}

function ModelView() {
  return (
    <div className="flex min-w-0 grow justify-end overflow-hidden bg-[#fcfcfc]">
      <svg viewBox="840 105 469 468" className="h-[468px] w-[469px] shrink-0" role="img" aria-label="Global deformations">
        {[1024, 1089, 1154, 1219, 1284].map((x) =>
          [143, 208, 272, 337, 402, 467, 531].map((y) => <rect key={`${x}-${y}`} x={x} y={y} width="1" height="1" fill="#bbb" />)
        )}
        <rect x="952" y="135" width="16" height="16" fill="#38d238" />
        <rect x="952" y="524" width="16" height="16" fill="#38d238" />
        <g transform="translate(840 110) scale(.33333)">
          <path d="M20 100H360V1266H20z" fill="#443a7a" />
          {bands.map(([c, pts]) => (
            <path key={c} d={bandPath(pts)} fill={c} />
          ))}
          <path d="M20 494Q60 510 85 520Q130 545 180 580Q255 640 255 683Q250 735 185 780Q120 835 20 870z" fill="#b43816" />
          <path d="M20 100H361V1266H20M68 100V1266M167 100V1266M263 100V1266" fill="none" stroke="#7a6e50" strokeWidth="3" strokeOpacity=".7" />
          {Array.from({ length: 11 }, (_, i) => (
            <path key={i} d={`M20 ${197 + i * 97}H360`} stroke="#7a6e50" strokeWidth="3" strokeOpacity=".6" />
          ))}
          <path d="M20 152H307V1213H20" fill="none" stroke="#e0a820" strokeWidth="3" strokeDasharray="18 9" strokeOpacity=".8" />
        </g>
        <circle cx="960" cy="143" r="2" fill="#e01010" />
        <circle cx="960" cy="532" r="2" fill="#e01010" />
        {["98.51", "72.39", "38.46"].map((t, i) => (
          <Tag key={t} x={866 + i * 32} y={123} w={29} text={t} />
        ))}
        {rowsLeft.map((t, i) => (
          <Tag key={i} x={866} y={155 + Math.round(i * 32.4)} text={t} />
        ))}
        {rowsRight.map((t, i) => (
          <Tag key={i} x={930} y={155 + Math.round(i * 32.4)} w={t.length > 5 ? 34 : 28} text={t} />
        ))}
        <g fill="none" stroke="#6d6a6a">
          <path d="M1205.500 138.500h67v67h-67z" />
          <path d="M1222.500 138v67M1256 138v67M1205 155h67M1205 188.500h67" strokeWidth="1.600" />
        </g>
        <text x="1229" y="178" fontSize="15" fontWeight="700" fill="#2c2c8c">
          +Z
        </text>
      </svg>
    </div>
  );
}

/* ---------- control panel ---------- */

const levels = ["248.61", "226.01", "203.41", "180.80", "158.20", "135.60", "113.00", "90.40", "67.80", "45.20", "22.60", "0.00"];
const shares: [string, string][] = [
  ["bg-[#b80000]", "21.05 %"],
  ["bg-[#ff0000]", "20.68 %"],
  ["bg-[#ffa800]", "13.52 %"],
  ["bg-[#d0d000]", "11.44 %"],
  ["bg-[#ffff00]", "10.55 %"],
  ["bg-[#00ff00]", "9.56 %"],
  ["bg-[#00e888]", "5.69 %"],
  ["bg-[#08f8f8]", "3.63 %"],
  ["bg-[#0098ff]", "2.26 %"],
  ["bg-[#0000ff]", "1.22 %"],
  ["bg-[#0000a8]", "0.38 %"],
];

const rangeClass =
  "min-h-0 w-[11px] grow appearance-none bg-transparent [writing-mode:vertical-lr] [&::-webkit-slider-thumb]:size-[11px] [&::-webkit-slider-thumb]:appearance-none [&::-webkit-slider-thumb]:bg-[#0078d7]";

function ControlPanel() {
  return (
    <aside className="flex w-[205px] shrink-0 flex-col border-l border-[#d8d8e0] bg-[#f7f7f7]">
      <h2 className="flex h-[21px] shrink-0 items-center bg-[#d8e6f3] pl-1 text-[12px] font-bold text-[#2a3340]">
        Control Panel
        <DockButtons />
      </h2>
      <div className="h-[37px] shrink-0 bg-white pt-[3px] pl-[5px] leading-[15px]">
        <p>Global Deformations</p>
        <p>|u| [mm]</p>
      </div>
      <div className="flex grow pt-2">
        <ul className="w-[59px] text-right">
          {levels.map((l) => (
            <li key={l} className="h-[26px] leading-[26px]">
              {l}
            </li>
          ))}
        </ul>
        <ul className="ml-[13px] flex w-[41px] flex-col gap-0.5 pt-[13px]">
          {shares.map(([c]) => (
            <li key={c} className={clsx("h-6", c)} />
          ))}
        </ul>
        <ul className="w-12 pt-[13px] text-right">
          {shares.map(([c, s]) => (
            <li key={c} className="h-[26px] leading-[26px]">
              {s}
            </li>
          ))}
        </ul>
        <div className="mt-1 ml-[7px] flex h-[300px] w-[11px] flex-col bg-[linear-gradient(to_right,transparent_5px,#dcdcdc_5px,#dcdcdc_7px,transparent_7px)]">
          <input type="range" aria-label="Upper limit" defaultValue={0} className={rangeClass} />
          <input type="range" aria-label="Lower limit" defaultValue={100} className={rangeClass} />
        </div>
      </div>
      <div className="flex h-[25px] shrink-0 items-center justify-end gap-1 bg-white pr-[5px]">
        <button type="button" aria-label="Options" className="flex h-5 w-[22px] items-center justify-center bg-[#cce8ff]">
          <Icon name="hand2" className="size-4" />
        </button>
        <button type="button" aria-label="Scales" className="flex h-5 w-[22px] items-center justify-center border border-[#6a9cc8] bg-[#cce8ff]">
          <Icon name="scales" className="size-4" />
        </button>
      </div>
      <nav className="flex h-6 shrink-0 border-t border-[#e0e0e0]">
        {["legend", "balance", "pick"].map((n) => (
          <button
            key={n}
            type="button"
            aria-label={n}
            className={clsx(
              "flex h-5 w-7 items-center justify-center border-r border-[#ddd]",
              n === "legend" ? "bg-white" : "bg-[#eee]"
            )}
          >
            <Icon name={n} className="size-[15px]" />
          </button>
        ))}
      </nav>
    </aside>
  );
}

/* ---------- result table ---------- */

const sums = [
  ["Sum of loads in X", "0.00", "kN", ""],
  ["Sum of support forces in X", "0.00", "kN", ""],
  ["Sum of loads in Y", "0.00", "kN", ""],
  ["Sum of support forces in Y", "0.00", "kN", ""],
  ["Sum of loads in Z", "47.10", "kN", ""],
  ["Sum of support forces in Z", "47.10", "kN", "Deviation: 0.00 %"],
];

function ResultRow({ row, odd }: { row: string[]; odd: boolean }) {
  const cell = "border-r border-b border-[#ece8dc] p-0";
  return (
    <tr className={clsx("h-4", odd ? "bg-[#fff9e6]" : "bg-[#fffcf2]")}>
      <td className="bg-[#e1e1e1] p-0" />
      <td className={clsx(cell, "pl-0.5")}>{row[0]}</td>
      <td className={clsx(cell, "pr-0.5 text-right")}>{row[1]}</td>
      <td className={clsx(cell, "pl-0.5")}>{row[2]}</td>
      <td className={clsx(cell, "pl-0.5")}>{row[3]}</td>
    </tr>
  );
}

function ResultDock() {
  return (
    <section className="flex h-[288px] shrink-0 flex-col bg-[#f7f7f7]">
      <div className="flex h-[21px] shrink-0 items-center bg-[#d8e6f3]">
        <DockButtons />
      </div>
      <div className="h-[19px] shrink-0 border-b border-[#eee]" />
      <div className="flex h-7 shrink-0 items-center">
        <div className="flex w-[581px] shrink-0 justify-end gap-1">
          <span className="h-3 w-2 bg-[#ccffff]" />
          <span className="h-3 w-2.5 bg-[#ccffff]" />
        </div>
        <label className="ml-1 flex h-[19px] items-center bg-[#e6e6f3]">
          <span className="mr-1.5 flex h-[13px] w-[30px] items-center justify-center bg-black text-white">G</span>
          <select aria-label="Load case" className="w-[191px] appearance-none bg-transparent">
            <option>LC1&nbsp;&nbsp;&nbsp;Self-weight</option>
          </select>
          <svg viewBox="0 0 10 6" className="mr-1 h-[5px] w-2" aria-hidden>
            <path d="M1 1l4 4 4-4" fill="none" stroke="#555" />
          </svg>
        </label>
        {["M7 1L3 5l4 4z", "M3 1l4 4-4 4z"].map((d, i) => (
          <button key={d} type="button" aria-label={i ? "Next" : "Previous"} className="flex h-[19px] w-4 items-center justify-center border-r border-[#ddd] bg-[#cdcdcd]">
            <svg viewBox="0 0 10 10" className="size-2.5" aria-hidden>
              <path d={d} fill="#444" />
            </svg>
          </button>
        ))}
        <Tools items="| *rotL *rotR | *wedgeeye *wedgex | table table2 table2 | bars | tablelite | excel ~ filterwin | decimals | help" />
      </div>
      <div className="flex min-h-0 grow">
        <div className="ml-[3px] min-w-0 grow overflow-hidden">
          <table className="w-full table-fixed border-collapse leading-[15px]">
            <colgroup>
              <col className="w-[60px]" />
              <col className="w-[350px]" />
              <col className="w-20" />
              <col className="w-20" />
              <col />
            </colgroup>
            <thead>
              <tr className="h-2.5 bg-[#e1e1e1]">
                <td colSpan={4} className="border-r border-[#d4d4d4] p-0" />
                <td className="p-0" />
              </tr>
              <tr className="h-8 bg-[#efefef]">
                <td colSpan={4} className="border-r border-b border-[#ddd] p-0" />
                <th className="border-b border-[#ddd] p-0 align-bottom font-normal">Notes</th>
              </tr>
            </thead>
            <tbody>
              <tr className="h-4 bg-[#e9e9e9]">
                <td colSpan={5} className="p-0" />
              </tr>
              {sums.map((r, i) => (
                <ResultRow key={i} row={r} odd={i % 2 === 1} />
              ))}
              <tr className="h-4 bg-white">
                <td colSpan={5} className="p-0" />
              </tr>
              <tr className="h-4 bg-[#e9e9e9]">
                <td colSpan={5} className="p-0 pl-0.5">
                  Resultant of reactions
                </td>
              </tr>
              <ResultRow
                row={["Resultant of reactions about X", "0.00", "kNm", "At center of gravity of model (2.500000, 3.000000, 0.000000 m)"]}
                odd={false}
              />
            </tbody>
          </table>
        </div>
        <div className="mr-0.5 w-4 shrink-0 bg-[#f0f0f0]">
          <div className="mx-auto mt-[17px] h-[43px] w-[9px] bg-[#858585]" />
        </div>
      </div>
      <div className="flex h-[22px] shrink-0 items-center border-t border-[#ddd] pl-1">
        {["M8 1L3 5l5 4zM1 1h1v8H1z", "M7 1L3 5l4 4z"].map((d) => (
          <button key={d} type="button" aria-label="Back" className="flex w-[18px] justify-center">
            <svg viewBox="0 0 10 10" className="size-2" aria-hidden>
              <path d={d} fill="#777" />
            </svg>
          </button>
        ))}
        <span className="px-3">1 of 1</span>
        {["M3 1l4 4-4 4z", "M2 1l5 4-5 4zM8 1h1v8H8z"].map((d) => (
          <button key={d} type="button" aria-label="Forward" className="flex w-[18px] justify-center">
            <svg viewBox="0 0 10 10" className="size-2" aria-hidden>
              <path d={d} fill="#777" />
            </svg>
          </button>
        ))}
        <button type="button" className="h-[21px] border-r border-[#ddd] bg-white px-1">
          Summary
        </button>
      </div>
    </section>
  );
}

/* ---------- dialog ---------- */

const categories = ["Materials", "Sections", "Model", "Loads", "Imperfections", "Results", "Dimensions", "Static Analysis", "Stability Analysis", "Construction Stages"];

const groups: { title: string; rows: [string, string, string][] }[] = [
  { title: "General", rows: [["Load Increment Factors", "--", "3"], ["Design Ratios", "--", "3"]] },
  {
    title: "Deformations and Strains",
    rows: [
      ["Displacements", "", "2"],
      ["Rotations", "mrad", "1"],
      ["Warping", "1/m", "3"],
      ["Axial and shear strain", "‰", "2"],
      ["Torsional and bending strain", "mrad/m", "1"],
      ["Angles", "deg", "2"],
    ],
  },
  {
    title: "Support Forces and Internal Forces",
    rows: [
      ["Internal forces on members and reactions", "kN", "2"],
      ["Moments on members and reactions", "kNm", "2"],
      ["Bimoments on members", "kNm^", "2"],
      ["Pressure on members", "bar", "2"],
      ["Internal forces on ribs", "kN/m", "2"],
      ["Internal forces on surfaces and reactions", "kN/m", "3"],
      ["Moments on surfaces", "kNm/m", "3"],
      ["Derivations of internal forces on surfaces", "N/mm^", "3"],
      ["Angles", "deg", "2"],
      ["Resultant forces", "kN", "2"],
      ["Resultant moments", "kNm", "2"],
    ],
  },
  {
    title: "Stresses",
    rows: [["Stresses on members", "N/mm^", "3"], ["Stresses on surfaces", "N/mm^", "3"], ["Stresses on solids", "N/mm^", "3"]],
  },
  {
    title: "Elastic Foundation",
    rows: [["Contact forces on members", "kN/m", "3"], ["Contact moments on members", "kNm/m", "2"], ["Contact stress on surfaces", "kN/m^", "2"]],
  },
];

function Unit({ text }: { text: string }) {
  if (!text.endsWith("^")) return <>{text}</>;
  return (
    <>
      {text.slice(0, -1)}
      <sup className="-top-[3px] text-[8px]">2</sup>
    </>
  );
}

function UnitGroup({ title, rows }: { title: string; rows: [string, string, string][] }) {
  return (
    <>
      <tr className="h-4 bg-[#e3e3e3]">
        <td className="p-0">
          <button type="button" aria-label={`Collapse ${title}`} className="ml-0.5 flex size-2.5 items-center justify-center border border-[#777] bg-white">
            <span className="h-px w-1.5 bg-[#333]" />
          </button>
        </td>
        <th colSpan={4} className="p-0 pl-[7px] text-left font-normal">
          {title}
        </th>
      </tr>
      {rows.map(([name, unit, places], i) => {
        const picked = name === "Displacements";
        return (
          <tr key={name} className="h-4">
            <td className={clsx("bg-[#e3e3e3] p-0", picked && "border-y border-l border-[#aaa]")} />
            <td className={clsx("border-r border-[#e8e8e8] bg-[#fafaf5] p-0", picked && "border-y border-y-[#aaa] border-r-[#aaa]")}>
              <span className="flex h-3.5 items-center gap-1 overflow-visible pl-3 whitespace-nowrap">
                <svg viewBox="0 0 11 16" className="h-4 w-[11px] shrink-0" aria-hidden>
                  <path d={i === rows.length - 1 ? "M.5 0v8.500H11" : "M.5 0v16M.5 8.500H11"} fill="none" stroke="#ddd" />
                </svg>
                {name}
              </span>
            </td>
            <td className="border-r border-[#e8e8e8] p-0 pl-[3px]">
              <Unit text={unit} />
            </td>
            <td className="border-r border-[#e8e8e8] p-0 text-center">{places}</td>
            <td className="bg-[#fafaf5] p-0" />
          </tr>
        );
      })}
      <tr className="h-4">
        <td className="bg-[#e3e3e3] p-0" />
        <td colSpan={4} className="p-0" />
      </tr>
    </>
  );
}

function UnitsDialog() {
  const [category, setCategory] = useState("Static Analysis");
  return (
    <div
      role="dialog"
      aria-label="Units and Decimal Places"
      className="absolute top-[51px] left-[157px] flex h-[700px] w-[690px] flex-col overflow-hidden rounded-lg border border-[#777] bg-white shadow-[0_8px_24px_rgba(0,0,0,0.35)]"
    >
      <header className="flex h-7 shrink-0 items-center bg-[#f3f3f3] pl-[7px] text-[#888]">
        <Logo />
        <span className="ml-0.5 text-[11px]">Units and Decimal Places</span>
        <svg viewBox="0 0 110 12" className="mr-[17px] ml-auto h-3 w-[110px]" fill="none" aria-hidden>
          <path d="M5 6h10" stroke="#ddd" />
          <path d="M51.500 1.500h9v9h-9zM98 1l10 10M108 1L98 11" stroke="#888" />
        </svg>
      </header>
      <div className="flex min-h-0 grow gap-2.5 bg-[#d1d0d5] p-[9px]">
        <div className="w-[180px] shrink-0 bg-white">
          <h3 className="flex h-5 items-center pl-[5px] font-bold text-[#4b5d88]">Category</h3>
          <ul>
            {categories.map((c) => (
              <li key={c} className="h-[18px]">
                <button
                  type="button"
                  onClick={() => setCategory(c)}
                  className={clsx("h-[18px] w-full pl-[3px] text-left", c === category && "bg-[#cce8ff]")}
                >
                  {c}
                </button>
              </li>
            ))}
          </ul>
        </div>
        <div className="flex min-w-0 grow flex-col bg-white">
          <h3 className="flex h-[18px] shrink-0 items-center pl-[5px] font-bold text-[#4b5d88]">Units and Decimal Places</h3>
          <div className="flex min-h-0 grow">
            <div className="min-w-0 grow overflow-hidden">
              <table className="w-full table-fixed border-separate border-spacing-0 leading-[14px]">
                <colgroup>
                  <col className="w-3.5" />
                  <col />
                  <col className="w-[110px]" />
                  <col className="w-20" />
                  <col className="w-6" />
                </colgroup>
                <thead>
                  <tr className="h-[9px] bg-[#e1e1e1]">
                    <td colSpan={2} className="border-r border-[#eee] p-0" />
                    <td className="border-r border-[#eee] p-0" />
                    <td className="border-r border-[#eee] p-0" />
                    <td className="p-0" />
                  </tr>
                  <tr className="h-[21px] bg-[#efefef]">
                    <td colSpan={2} className="border-r border-[#ddd] p-0" />
                    <th className="border-r border-[#ddd] p-0 font-normal">Unit</th>
                    <th className="border-r border-[#ddd] p-0 font-normal">Dec. Places</th>
                    <td className="p-0" />
                  </tr>
                </thead>
                <tbody>
                  {groups.map((gr) => (
                    <UnitGroup key={gr.title} {...gr} />
                  ))}
                  <tr className="h-4 bg-[#e3e3e3]">
                    <td colSpan={5} className="p-0" />
                  </tr>
                </tbody>
              </table>
            </div>
            <div className="w-[17px] shrink-0 bg-[#f0f0f0]">
              <div className="mx-auto mt-[17px] h-[407px] w-[9px] bg-[#858585]" />
            </div>
          </div>
        </div>
      </div>
      <footer className="flex h-[42px] shrink-0 items-center gap-2 px-[9px]">
        {["help", "db", "tmplA", "tmplB"].map((n) => (
          <button
            key={n}
            type="button"
            aria-label={n}
            className={clsx(
              "mb-1 flex h-[19px] w-[23px] items-center justify-center bg-[#cce4f7]",
              n === "tmplB" && "-ml-1.5",
              (n === "help" || n === "db") && "mr-0.5"
            )}
          >
            <Icon name={n} className="size-4" />
          </button>
        ))}
        <span className="grow" />
        {["OK", "Cancel", "Apply"].map((b) => (
          <button
            key={b}
            type="button"
            disabled={b === "Apply"}
            className="h-[22px] w-[83px] rounded-xs border border-[#d8d8d8] bg-[#fdfdfd] disabled:border-[#eee] disabled:bg-[#f8f8f8] disabled:text-[#999]"
          >
            {b}
          </button>
        ))}
      </footer>
    </div>
  );
}

function Annotations() {
  return (
    <svg
      viewBox="150 190 740 90"
      className="pointer-events-none absolute top-[190px] left-[150px] h-[90px] w-[740px] overflow-visible drop-shadow-[1px_3px_2px_rgba(0,0,0,0.5)]"
      aria-hidden
    >
      <g fill="none" stroke="#ff5b4c" strokeWidth="5">
        <rect x="162.500" y="226" width="86" height="32" rx="3" />
        <rect x="728" y="210.500" width="63" height="24" rx="3" />
      </g>
      <path
        d="M284 240Q278 241 278 246T284 251L682 230L677 241L706 223L676 207L682 219zM812 239Q806 240 806 245T811 250L843 253L837 265L868 250L842 230L844 243z"
        fill="#ff5b4c"
      />
    </svg>
  );
}

/* ---------- main window ---------- */

const menus = ["File", "Edit", "View", "Insert", "Assign", "Calculate", "Results", "Tools", "Options", "Window", "CAD-BIM", "Help"];

export default function App() {
  return (
    <div className="relative flex h-screen flex-col overflow-hidden bg-[#f7f7f7] font-['Open_Sans','Noto_Sans',sans-serif] text-[10px] text-[#1c1c1c]">
      <div className="h-[7px] shrink-0 border-b border-[#cfcfc8] bg-[#ecece4]" />
      <header className="flex h-[23px] shrink-0 items-center bg-[#f3f3f3] pl-0.5 text-[#888]">
        <Logo />
        <h1 className="ml-0.5 text-[11px]">Dlubal RFEM | 6.06.0008 | test.rf6* | Test</h1>
        <svg viewBox="0 0 104 12" className="mr-5 ml-auto h-3 w-[104px]" fill="none" stroke="#888" aria-hidden>
          <path d="M2 6h10M47.500 3.500h7v7h-7zM49.500 3.500v-2h7v7h-2M94 1l10 10M104 1L94 11" />
        </svg>
      </header>
      <nav className="flex h-5 shrink-0 items-center bg-[#f7f7f7] pl-0.5">
        <svg viewBox="0 0 16 14" className="h-3.5 w-4 shrink-0" aria-hidden>
          <path d="M0 1h16v12H0z" fill="#1b2c6e" />
          <path d="M0 6l5-3 11 4M0 10h16M5 3v10" stroke="#dfe6ff" strokeWidth=".8" fill="none" />
        </svg>
        <div className="flex gap-2 pl-[3px]">
          {menus.map((m) => (
            <button key={m} type="button" className="whitespace-nowrap">
              {m}
            </button>
          ))}
        </div>
        <div className="ml-auto flex items-center">
          <svg viewBox="0 0 6 8" className="mr-1 h-2 w-1.5" aria-hidden>
            <path d="M0 0l5 4-5 4z" fill="#888" />
          </svg>
          <input
            type="search"
            aria-label="Search"
            placeholder="Type a keyword (Alt+Q)"
            className="h-[17px] w-[228px] bg-[#e6e6f2] pl-0.5 placeholder:text-[#888]"
          />
          <svg viewBox="0 0 16 12" className="mx-1 h-3 w-4" fill="none" stroke="#888" aria-hidden>
            <path d="M0 2h6M0 6h6M0 11h15M13 7l3 3" />
            <circle cx="10.500" cy="4.500" r="3.500" />
          </svg>
          <span className="whitespace-nowrap">Online License 37 | Frank Faulstich | Dlubal Software GmbH</span>
          <span className="mt-1.5 mr-3 ml-2 h-0.5 w-2 bg-[#111]" />
          <DockButtons />
        </div>
      </nav>
      <div className="flex h-[26px] shrink-0 items-center border-t border-[#e8e8e8]">
        <div className="flex w-[850px] shrink-0 items-center pl-2.5">
          <Tools items="new open dlubal blocks hand save print" />
        </div>
        <button type="button" aria-label="play" className="flex h-[21px] w-4 shrink-0 items-center justify-center bg-[#e4e4ee]">
          <Icon name="play" className="size-3.5" />
        </button>
        <Tools items="filterx v curveeye curvex loadeye loadx boxes *grideye *v *wedgeeye *wedgex | wedgewin abacus v | zoomx cube cubepen cubewire | ax ay az anx v scope v | solid v plate v" />
        <span className="ml-auto pr-1 text-[14px] leading-4">»</span>
      </div>
      <div className="flex h-[29px] shrink-0 items-center border-t border-[#e8e8e8]">
        <div className="flex w-[842px] shrink-0 items-center pl-1.5">
          <Tools items="node v line member v poly v | support" />
        </div>
        <Tools items="supA supB supC supD winstar pin | colors v | ~ gridwin gridnode *planeA planeB planeC | link rotate mirror cut camera" />
      </div>
      <div className="flex min-h-0 grow pl-0.5">
        <Navigator />
        <main className="flex min-w-0 grow flex-col">
          <div className="flex min-h-0 grow">
            <ModelView />
            <ControlPanel />
          </div>
          <ResultDock />
        </main>
      </div>
      <div className="flex h-[22px] shrink-0 items-center border-t border-[#ddd] pl-1">
        <Icon name="xyz" className="size-4" />
        <label className="mr-1.5 ml-1 flex h-[19px] w-[199px] shrink-0 items-center bg-[#e6e6f3] px-1">
          <span className="mr-1 h-3 w-2.5 bg-[#ccffff]" />
          <select aria-label="Coordinate system" className="grow appearance-none bg-transparent">
            <option>1 - Global XYZ</option>
          </select>
          <svg viewBox="0 0 10 6" className="h-[5px] w-2" aria-hidden>
            <path d="M1 1l4 4 4-4" fill="none" stroke="#555" />
          </svg>
        </label>
        <Tools
          cell="w-5"
          items="vA vB vC vD vE ~ | cA cB cC v cD cE cF | nA v nB v | l1 l2 l3 v l4 l5 l6 l7 l8 l9 l10 | m1 v m2 m3 m4"
        />
        <div className="mr-0.5 ml-auto flex shrink-0 items-center">
          <Tools cell="w-5" items="*gE ~ ~ gS *gF ~ ~ gD *gF ~ ~ ~ ang ~ ~" />
          <div className="flex w-[390px] items-center justify-between">
            <Tools
              cell="w-5"
              items="*gM *magnet *sq *cx bx *perp sl sl2 tang circ in1 in2 in3 dots *grid *box4 *stack *dim *down"
            />
          </div>
        </div>
      </div>
      <footer className="flex h-[19px] shrink-0 items-center border-b border-[#999] bg-[linear-gradient(to_right,#e6e6f2,#d3d3dc_15%,#d3d3dc_85%,#e6e6f2)]">
        <span className="grow" />
        <span className="w-[203px] shrink-0">CS: Global XYZ</span>
        <span className="w-[281px] shrink-0">Plane: XY</span>
      </footer>
      <UnitsDialog />
      <Annotations />
      <svg viewBox="0 0 12 20" className="pointer-events-none absolute top-[82px] right-[62px] h-5 w-3" aria-hidden>
        <path d="M1 1v15l3.500-3.500 3 6.500 2.500-1-3-6.500h5z" fill="#fff" stroke="#222" />
      </svg>
    </div>
  );
}
